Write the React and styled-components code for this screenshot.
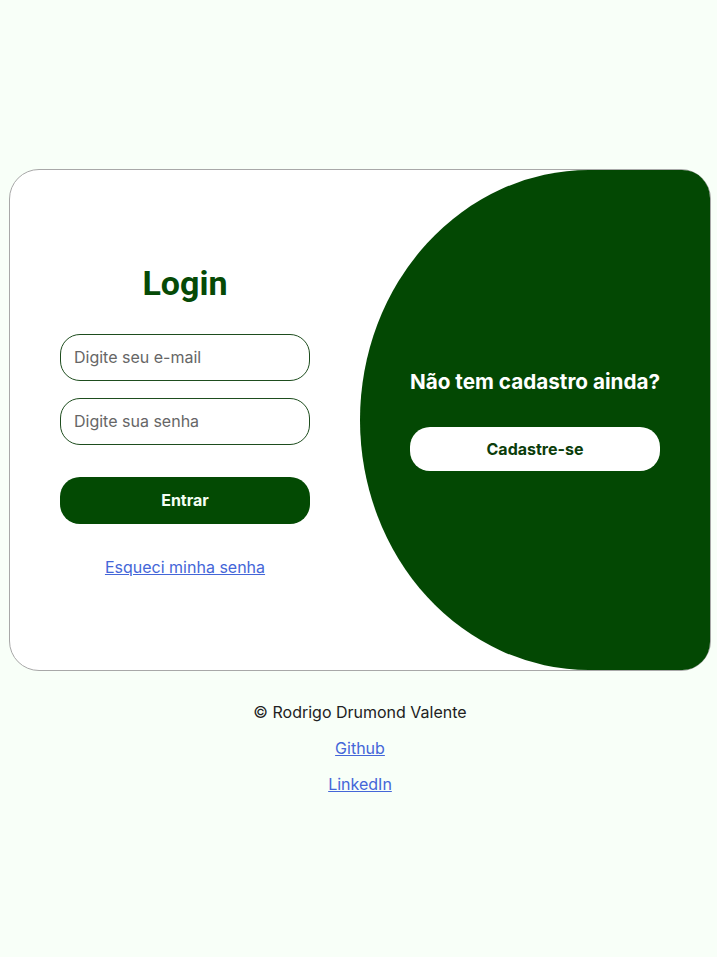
import React from "react";
import styled, { createGlobalStyle } from "styled-components";

const GlobalStyle = createGlobalStyle`
  * {
    box-sizing: border-box;
  }
  body {
    margin: 0;
    background: #f8fff8;
    font-family: Inter, "Noto Sans", sans-serif;
  }
`;

function App() {
  return (
    <>
      <GlobalStyle />
      <Page>
        <Card>
          <LoginSide>
            <Title>Login</Title>
            <Field type="email" placeholder="Digite seu e-mail" />
            <Field type="password" placeholder="Digite sua senha" $gap="17px" />
            <MainButton>Entrar</MainButton>
            <LinkText href="#">Esqueci minha senha</LinkText>
          </LoginSide>
          <SignupSide>
            <SignupTitle>Não tem cadastro ainda?</SignupTitle>
            <WhiteButton>Cadastre-se</WhiteButton>
          </SignupSide>
        </Card>
        <Footer>
          <FooterLine>© Rodrigo Drumond Valente</FooterLine>
          <FooterLine>
            <LinkText href="#">Github</LinkText>
          </FooterLine>
          <FooterLine>
            <LinkText href="#">LinkedIn</LinkText>
          </FooterLine>
        </Footer>
      </Page>
    </>
  );
}

const Page = styled.div`
  padding: 169px 6px 0 9px;
  min-height: 100vh;
`;

const Card = styled.div`
  display: flex;
  width: 702px;
  height: 502px;
  border: 1px solid #a8a8a8;
  border-radius: 30px;
  background: #fff;
`;

const LoginSide = styled.div`
  flex: 0 0 350px;
  display: flex;
  flex-direction: column;
  align-items: center;
  justify-content: center;
`;

const Title = styled.h1`
  margin: 0 0 32px;
  font-family: Roboto, sans-serif;
  font-weight: 700;
  font-size: 34px;
  line-height: 38px;
  color: #064a06;
`;

const Field = styled.input`
  width: 250px;
  height: 47px;
  margin-top: ${(p) => p.$gap || "0"};
  padding: 0 13px;
  border: 1px solid #1e4d1e;
  border-radius: 20px;
  background: #fff;
  font-family: Inter, sans-serif;
  font-size: 16px;
  color: #333;
  outline: none;
  &::placeholder {
    color: #666;
  }
`;

const MainButton = styled.button`
  width: 250px;
  height: 47px;
  margin-top: 32px;
  border: none;
  border-radius: 20px;
  background: #034a03;
  color: #f4fff4;
  font-family: Inter, sans-serif;
  font-weight: 700;
  font-size: 16px;
  cursor: pointer;
`;

const LinkText = styled.a`
  color: #4466d8;
  font-size: 16px;
  line-height: 20px;
  text-decoration: underline;
  ${LoginSide} & {
    margin-top: 33px;
  }
`;

const SignupSide = styled.div`
  flex: 1;
  display: flex;
  flex-direction: column;
  align-items: center;
  justify-content: center;
  background: #034803;
  border-radius: 230px 28px 28px 230px / 251px 28px 28px 251px;
`;

const SignupTitle = styled.h2`
  margin: 0 0 33px;
  font-family: Inter, sans-serif;
  font-weight: 700;
  font-size: 20.7px;
  line-height: 24px;
  color: #fff;
`;

const WhiteButton = styled.button`
  width: 250px;
  height: 44px;
  border: none;
  border-radius: 20px;
  background: #fff;
  color: #0b3d0b;
  font-family: Inter, sans-serif;
  font-weight: 700;
  font-size: 16px;
  cursor: pointer;
`;

const Footer = styled.footer`
  display: flex;
  flex-direction: column;
  align-items: center;
  gap: 16px;
  width: 702px;
  padding-top: 31px;
`;

const FooterLine = styled.p`
  margin: 0;
  font-size: 16px;
  line-height: 20px;
  color: #222;
`;

export default App;
